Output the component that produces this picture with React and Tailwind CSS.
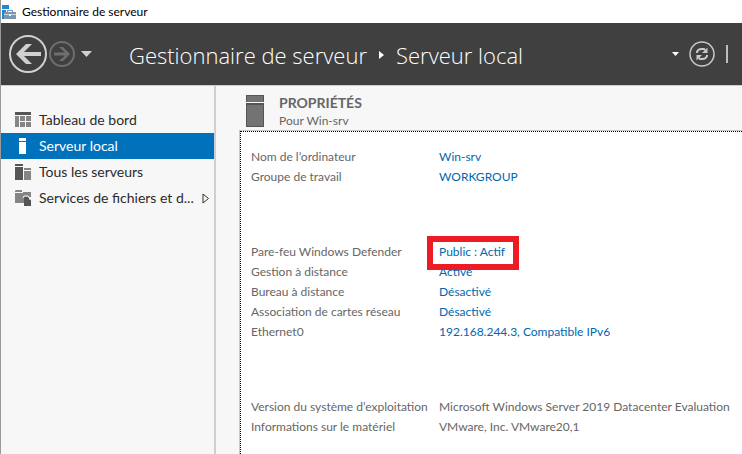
import React from "react";

const navItems = [
  { label: "Tableau de bord", icon: DashboardIcon },
  { label: "Serveur local", icon: ServerIcon, active: true },
  { label: "Tous les serveurs", icon: ServersIcon },
  { label: "Services de fichiers et d...", icon: FilesIcon, expandable: true },
];

const groups = [
  [
    { name: "Nom de l\u2019ordinateur", value: "Win-srv", link: true },
    { name: "Groupe de travail", value: "WORKGROUP", link: true },
  ],
  [
    { name: "Pare-feu Windows Defender", value: "Public : Actif", link: true, marked: true },
    { name: "Gestion à distance", value: "Activé", link: true },
    { name: "Bureau à distance", value: "Désactivé", link: true },
    { name: "Association de cartes réseau", value: "Désactivé", link: true },
    { name: "Ethernet0", value: "192.168.244.3, Compatible IPv6", link: true },
  ],
  [
    { name: "Version du système d\u2019exploitation", value: "Microsoft Windows Server 2019 Datacenter Evaluation" },
    { name: "Informations sur le matériel", value: "VMware, Inc. VMware20,1" },
  ],
];

function AppIcon() {
  return (
    <svg width="16" height="16" viewBox="0 0 16 16" aria-hidden="true" shapeRendering="crispEdges">
      <path d="M1 1h7v4H1zM1 6h4v2H3v7H1z" fill="#1e88d2" />
      <path d="M6 6h6v2h3v7H3V8h3zM7 7v1h4V7z" fill="#7896ad" fillRule="evenodd" />
      <path d="M3 10h12v1H3z" fill="#c7d8e4" />
      <path d="M8 10h2v2H8z" fill="#f2f6f8" />
    </svg>
  );
}

function DashboardIcon() {
  return (
    <svg width="16" height="16" viewBox="0 0 16 16" aria-hidden="true" shapeRendering="crispEdges">
      <path d="M0 0h16v3H0z" fill="#555" />
      <path d="M0 4h4v11H0zM5 4h5v5H5zM11 4h5v5h-5zM5 10h5v5H5zM11 10h5v5h-5z" fill="#858585" />
    </svg>
  );
}

function ServerIcon() {
  return (
    <svg width="16" height="16" viewBox="0 0 16 16" aria-hidden="true" shapeRendering="crispEdges">
      <path d="M4 0h7v3H4zM4 4h7v12H4z" fill="#fff" />
    </svg>
  );
}

function ServersIcon() {
  return (
    <svg width="16" height="16" viewBox="0 0 16 16" aria-hidden="true" shapeRendering="crispEdges">
      <path d="M0 0h8v2H0zM0 3h8v13H0z" fill="#555" />
      <path d="M9 4h7v2H9zM9 7h7v9H9z" fill="#858585" />
    </svg>
  );
}

function FilesIcon() {
  return (
    <svg width="16" height="16" viewBox="0 0 16 16" aria-hidden="true">
      <path d="M1 0h6v2H0V1zM0 3h8V2h8v5H9v6H0z" fill="#858585" />
      <path d="M9 7h4l3 3v6H9z" fill="#555" />
      <path d="M8 8l1-2h4q2 1 2 4" stroke="#f7f7f7" fill="none" />
    </svg>
  );
}

function BackIcon() {
  return (
    <svg width="38" height="38" viewBox="0 0 38 38" fill="none" aria-hidden="true">
      <circle cx="19" cy="19" r="18" stroke="#d0d0d0" strokeWidth="2" />
      <path d="M7 19l10-10h6l-8 8h17v4H15l8 8h-6z" fill="#d0d0d0" />
    </svg>
  );
}

function ForwardIcon() {
  return (
    <svg width="26" height="26" viewBox="0 0 26 26" fill="none" aria-hidden="true">
      <circle cx="13" cy="13" r="12" stroke="#6e6e6e" strokeWidth="2" />
      <path d="M21 13l-7 7h-4l6-5.500H5v-3h11L10 6h4z" fill="#6e6e6e" />
    </svg>
  );
}

function RefreshIcon() {
  return (
    <svg width="26" height="26" viewBox="0 0 26 26" fill="none" aria-hidden="true">
      <circle cx="13" cy="13" r="12" stroke="#c9c9c9" strokeWidth="1.500" />
      <path d="M8 12v-1q1-3 4.500-3H15l1 1M18 14v1q-1 3-4.500 3H11l-1-1" stroke="#c9c9c9" strokeWidth="2" />
      <path d="M18.500 6.500V12H13zM7.500 19.500V14H13z" fill="#c9c9c9" />
    </svg>
  );
}

function Header() {
  return (
    <header className="flex h-[62px] items-center bg-[#404040] pl-2 text-white">
      <button type="button" aria-label="Précédent"><BackIcon /></button>
      <button type="button" aria-label="Suivant" className="ml-0.5"><ForwardIcon /></button>
      <button type="button" aria-label="Historique" className="ml-[6px]">
        <svg width="12" height="7" viewBox="0 0 12 7" aria-hidden="true"><path d="M0 0h11L5.500 6z" fill="#d0d0d0" /></svg>
      </button>
      <h1 className="ml-9 flex items-center pt-0.5 font-['Open_Sans',sans-serif] text-[22px] font-light whitespace-nowrap">
        <span>Gestionnaire de serveur</span>
        <svg className="mx-3 shrink-0" width="5" height="8" viewBox="0 0 5 8" aria-hidden="true"><path d="M0 0l5 4-5 4z" fill="#fff" /></svg>
        <span>Serveur local</span>
      </h1>
      <div className="ml-auto flex items-center pr-3.5">
        <button type="button" aria-label="Options">
          <svg width="7" height="4" viewBox="0 0 7 4" aria-hidden="true"><path d="M0 0h7L3.500 4z" fill="#fff" /></svg>
        </button>
        <button type="button" aria-label="Actualiser" className="ml-2.5"><RefreshIcon /></button>
        <span className="ml-[11px] h-[18px] w-0.5 bg-[#bdbdbd]" />
      </div>
    </header>
  );
}

function Sidebar() {
  return (
    <nav className="w-[215px] shrink-0 border-r-2 border-[#cfcfcf] pt-[21px] text-sm text-[#2b2b2b]">
      {navItems.map(({ label, icon: Icon, active, expandable }) => (
        <a
          key={label}
          href="#"
          className={`flex h-[26px] items-center pl-3.5 whitespace-nowrap ${active ? "bg-[#0072bc] text-white" : ""}`}
        >
          <Icon />
          <span className="ml-2">{label}</span>
          {expandable && (
            <svg className="mr-1 ml-auto" width="8" height="11" viewBox="0 0 8 11" fill="none" aria-hidden="true">
              <path d="M1 1l5.500 4.500L1 10z" stroke="#333" />
            </svg>
          )}
        </a>
      ))}
    </nav>
  );
}

function Properties() {
  return (
    <main className="flex min-w-0 flex-1 flex-col pt-[9px] pl-[23px]">
      <div className="flex h-[35px] gap-[15px] pl-[7px]">
        <svg width="18" height="32" viewBox="0 0 18 32" aria-hidden="true">
          <path d="M0 0h18v32H0z" fill="#555" />
          <path d="M1 1h16v6H1zM1 10h16v21H1z" fill="#737373" />
          <path d="M0 7h18v1H0z" fill="#f7f7f7" />
        </svg>
        <div className="text-[#666]">
          <h2 className="text-sm leading-4 font-bold">PROPRIÉTÉS</h2>
          <p className="text-xs leading-5">Pour Win-srv</p>
        </div>
      </div>
      <section className="flex-1 border-t border-l border-[#c8c8c8] bg-white">
        <div className="flex h-full flex-col gap-[55px] border-t border-l border-dotted border-black pt-[15px] pb-4 pl-2.5 text-xs leading-5 text-[#666]">
          {groups.map((rows) => (
            <dl key={rows[0].name}>
              {rows.map((row) => (
                <div key={row.name} className="flex whitespace-nowrap">
                  <dt className="w-[188px] shrink-0">{row.name}</dt>
                  <dd className="relative">
                    {row.link ? <a href="#" className="text-[#0067b0]">{row.value}</a> : row.value}
                    {row.marked && (
                      <span className="pointer-events-none absolute -top-1.5 -left-3 z-10 h-[34px] w-[92px] border-6 border-[#ed1c24]" />
                    )}
                  </dd>
                </div>
              ))}
            </dl>
          ))}
        </div>
      </section>
    </main>
  );
}

export default function App() {
  return (
    <div className="flex min-h-screen flex-col overflow-hidden border-l border-[#999] bg-[#f7f7f7] font-['Lato','Open_Sans',sans-serif]">
      <div className="flex h-[23px] items-center gap-[5px] bg-white text-xs text-black">
        <AppIcon />
        <span>Gestionnaire de serveur</span>
      </div>
      <Header />
      <div className="flex flex-1 border-t border-[#cfcfcf]">
        <Sidebar />
        <Properties />
      </div>
    </div>
  );
}
